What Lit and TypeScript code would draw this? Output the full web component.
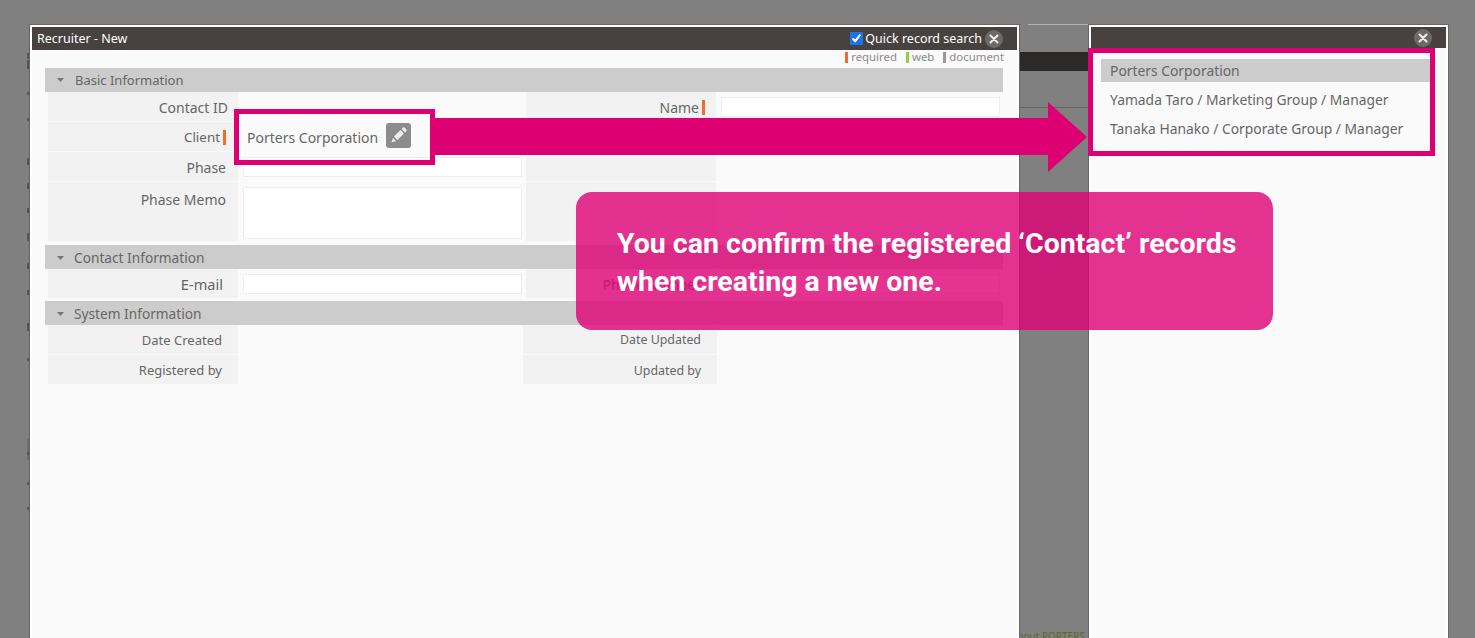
import { LitElement, html, css, svg } from "lit";
import { customElement } from "lit/decorators.js";

const marks = [
  [53, 6], [60, 9], [92, 3], [118, 3], [158, 7], [183, 6], [208, 5], [233, 8], [263, 6], [290, 5], [323, 8], [358, 3], [452, 3], [482, 3], [507, 3],
];

const caret = html`<svg class="caret" width="7" height="4" viewBox="0 0 7 4"><path d="M0 0h7L3.5 4z" fill="#777"/></svg>`;
const closeIcon = svg`<path d="M5.5 5.5l7 7M12.5 5.5l-7 7" stroke="#eee" stroke-width="2" stroke-linecap="round"/>`;

@customElement("app-root")
export class AppRoot extends LitElement {
  static styles = css`
    :host { display: block; width: 1475px; height: 638px; position: relative; overflow: hidden; background: #808080; font-family: "Noto Sans", sans-serif; color: #666; }
    .backdrop { position: absolute; inset: 0; }
    .bar { position: absolute; left: 1019px; top: 52px; width: 70px; height: 19px; background: #2b2a28; }
    .line { position: absolute; left: 1019px; top: 107px; width: 70px; height: 1px; background: #666; }
    .topline { position: absolute; left: 1028px; top: 24px; width: 61px; height: 1px; background: #b4b4b4; }
    .bout { position: absolute; left: 1020px; top: 630px; width: 68px; overflow: hidden; white-space: nowrap; font-size: 10px; line-height: 12px; color: #5a6a20; text-indent: -9px; }
    .mark { position: absolute; left: 27px; width: 2px; background: #555; }
    .faint { position: absolute; left: 27px; top: 438px; width: 2px; height: 22px; background: #6f6f6f; }
    .win { position: absolute; top: 25px; height: 613px; box-sizing: border-box; background: #fafafa; border: 2px solid #fff; border-bottom: 0; outline: 1px solid #666; display: flex; flex-direction: column; }
    .w1 { left: 30px; width: 989px; }
    .w2 { left: 1089px; width: 359px; }
    .title { height: 23px; flex: none; background: #474240; color: #fff; display: flex; align-items: center; font-size: 12.5px; padding: 0 5px; box-sizing: border-box; }
    .w2 .title { height: 21px; justify-content: flex-end; padding-right: 13px; }
    .title .name { flex: 1; }
    .quick { display: flex; align-items: center; gap: 2px; margin-right: 3px; }
    .quick input { width: 13px; height: 13px; margin: 0 0 0 -1px; accent-color: #1a73e8; }
    .close { width: 18px; height: 18px; display: block; border-radius: 50%; background: #6d6a68; margin-right: 1px; }
    .w1 .close { margin-right: 9px; }
    .legend { height: 18px; box-sizing: border-box; padding: 1px 13px 0 0; display: flex; justify-content: flex-end; align-items: flex-start; gap: 9px; font-size: 11.4px; line-height: 12px; color: #8a8a8a; }
    .legend span { display: flex; align-items: center; gap: 3px; }
    .legend i { width: 3px; height: 11px; }
    .content { padding-left: 13px; width: 958px; }
    .section { height: 24px; background: #ccc; display: flex; align-items: center; gap: 10px; padding: 1px 0 0 12px; font-size: 13.7px; color: #666; box-sizing: border-box; }
    .section.first { font-size: 13px; gap: 11px; padding: 0 0 0 12px; }
    .caret { flex: none; }
    .grid { display: grid; grid-template-columns: 190px 288px 190px 287px; margin-left: 3px; }
    .cell { display: flex; align-items: center; box-sizing: border-box; height: 30px; padding-top: 1px; }
    .lab { background: #f2f2f2; justify-content: flex-end; font-size: 14px; color: #666; border-bottom: 1px solid #fafafa; gap: 3px; }
    .lab i { width: 3px; height: 15px; background: #f26c2a; }
    .val { padding: 0 0 0 5px; }
    .top { align-items: flex-start; padding-top: 8px; }
    .field { width: 279px; box-sizing: border-box; background: #fff; border: 1px solid #eee; height: 20px; }
    .memo { height: 52px; }
    .tall { height: 60px; margin-bottom: 3px; }
    .memoval { padding-top: 5px; }
    .email { font-size: 14.6px; }
    .client { font-size: 13.4px; }
    .phone { font-size: 13.7px; }
    .pr10 { padding-right: 10px; } .pr11 { padding-right: 11px; } .pr12 { padding-right: 12px; } .pr15 { padding-right: 15px; }
    .after { margin-bottom: 2px; }
    .sys { display: grid; grid-template-columns: 190px 285px 194px; margin-left: 3px; }
    .sys .lab { font-size: 13px; padding-right: 16px; }
    .sys .lab.rt { font-size: 12.4px; }
    .sys .lab.up { padding-top: 0; }
    .list { padding: 10px 11px 0 10px; font-size: 13.85px; color: #666; margin-top: 1px; }
    .list div { height: 29px; display: flex; align-items: center; padding-left: 9px; }
    .list .head { height: 23px; box-sizing: border-box; padding-bottom: 1px; background: #ccc; margin-bottom: 3px; }
    .hl { position: absolute; box-sizing: border-box; border: 5px solid #dc0073; }
    .h1 { left: 234px; top: 109px; width: 201px; height: 56px; display: flex; align-items: center; gap: 8px; padding: 1px 0 0 8px; font-size: 14px; color: #666; white-space: nowrap; }
    .h2 { left: 1088px; top: 48px; width: 347px; height: 108px; }
    .edit { width: 25px; height: 25px; background: #8c8c8c; border-radius: 3px; display: block; flex: none; margin-bottom: 4px; }
    .arrow { position: absolute; left: 434px; top: 102px; }
    .callout { position: absolute; left: 576px; top: 192px; width: 697px; height: 138px; box-sizing: border-box; border-radius: 16px; background: rgba(222, 0, 118, 0.8); color: #fff; font: 700 28.5px/38px Roboto, sans-serif; padding: 33px 0 0 41px; white-space: nowrap; }
  `;

  render() {
    return html`
      <div class="backdrop">
        <div class="bar"></div><div class="line"></div><div class="topline"></div>
        <div class="bout">About PORTERS</div>
        <div class="faint"></div>
        ${marks.map(([t, h]) => html`<div class="mark" style="top:${t}px;height:${h}px"></div>`)}
      </div>

      <section class="win w1">
        <div class="title">
          <span class="name">Recruiter - New</span>
          <label class="quick"><input type="checkbox" checked />Quick record search</label>
          <svg class="close" viewBox="0 0 18 18">${closeIcon}</svg>
        </div>
        <div class="legend">
          <span><i style="background:#f26c2a"></i>required</span>
          <span><i style="background:#9ccb3b"></i>web</span>
          <span><i style="background:#999"></i>document</span>
        </div>
        <div class="content">
          <div class="section first">${caret}Basic Information</div>
          <div class="grid">
            <div class="cell lab pr10">Contact ID</div><div class="cell val"></div>
            <div class="cell lab pr11">Name<i></i></div><div class="cell val"><div class="field"></div></div>
            <div class="cell lab pr12 client">Client<i></i></div><div class="cell val"></div>
            <div class="cell lab"></div><div class="cell"></div>
            <div class="cell lab pr12">Phase</div><div class="cell val"><div class="field"></div></div>
            <div class="cell lab"></div><div class="cell"></div>
            <div class="cell lab tall pr12 top">Phase Memo</div><div class="cell val tall top memoval"><div class="field memo"></div></div>
            <div class="cell lab tall"></div><div class="cell tall"></div>
          </div>
          <div class="section">${caret}Contact Information</div>
          <div class="grid after">
            <div class="cell lab pr15 email">E-mail</div><div class="cell val"><div class="field"></div></div>
            <div class="cell lab pr15 phone">Phone Number</div><div class="cell val"><div class="field"></div></div>
          </div>
          <div class="section">${caret}System Information</div>
          <div class="sys">
            <div class="cell lab up">Date Created</div><div></div><div class="cell lab rt up">Date Updated</div>
            <div class="cell lab">Registered by</div><div></div><div class="cell lab rt">Updated by</div>
          </div>
        </div>
      </section>

      <section class="win w2">
        <div class="title"><svg class="close" viewBox="0 0 18 18">${closeIcon}</svg></div>
        <div class="list">
          <div class="head">Porters Corporation</div>
          <div>Yamada Taro / Marketing Group / Manager</div>
          <div>Tanaka Hanako / Corporate Group / Manager</div>
        </div>
      </section>

      <svg class="arrow" width="654" height="70" viewBox="0 0 654 70"><path d="M0 16H614V0L653 35 614 70V53H0z" fill="#dc0073"/></svg>
      <div class="hl h1">
        Porters Corporation
        <svg class="edit" viewBox="0 0 25 25"><path d="M5.5 19.5l1.4-4.6 3.2 3.2zM8 13.6l6.6-6.6 3.4 3.4-6.6 6.6zM15.6 6l1.4-1.4a1 1 0 0 1 1.4 0l2 2a1 1 0 0 1 0 1.4L19 9.4z" fill="#eee"/></svg>
      </div>
      <div class="hl h2"></div>
      <div class="callout">You can confirm the registered ‘Contact’ records<br />when creating a new one.</div>
    `;
  }
}
